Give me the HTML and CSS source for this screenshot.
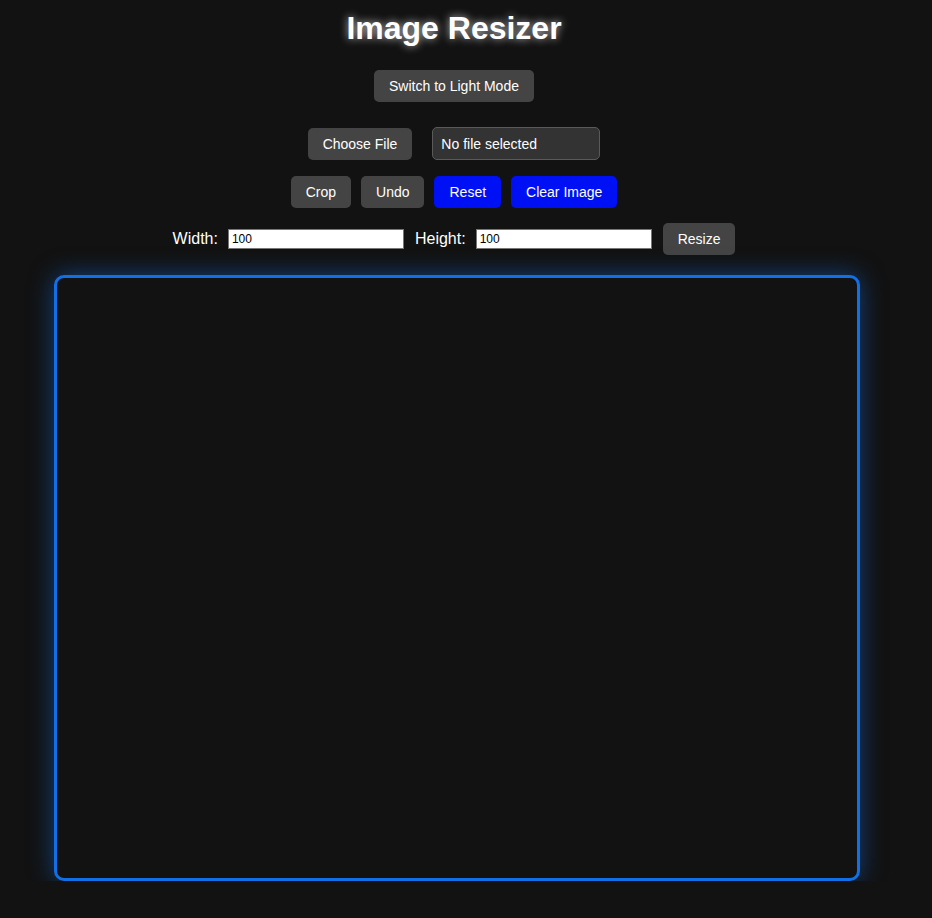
FILE: index.html
```html
<!DOCTYPE html>
<html>
<head>
<meta charset="utf-8">
<title>Image Resizer</title>
<link rel="stylesheet" href="styles.css">
</head>
<body>
<div class="app">
  <h1 class="title">Image Resizer</h1>
  <button class="btn mode-btn">Switch to Light Mode</button>
  <div class="row file-row">
    <button class="btn">Choose File</button>
    <div class="file-name">No file selected</div>
  </div>
  <div class="row action-row">
    <button class="btn">Crop</button>
    <button class="btn">Undo</button>
    <button class="btn btn-blue">Reset</button>
    <button class="btn btn-blue">Clear Image</button>
  </div>
  <div class="row size-row">
    <label class="size-label">Width:</label>
    <input class="size-input" type="text" value="100">
    <label class="size-label size-label-2">Height:</label>
    <input class="size-input" type="text" value="100">
    <button class="btn resize-btn">Resize</button>
  </div>
  <div class="canvas-box"></div>
</div>
</body>
</html>
```
FILE: styles.css
```css
html, body {
  margin: 0;
  padding: 0;
  background: #121212;
}
body {
  font-family: "Liberation Sans", Arial, sans-serif;
  color: #fff;
}
.app {
  width: 908px;
  display: flex;
  flex-direction: column;
  align-items: center;
}
.title {
  margin: 10px 0 0;
  font-size: 32px;
  line-height: 37px;
  font-weight: bold;
  color: #fff;
  text-shadow: 0 0 8px rgba(255,255,255,0.75);
}
.btn {
  font-family: "Liberation Sans", Arial, sans-serif;
  font-size: 14px;
  line-height: 16px;
  padding: 8px 15px;
  height: 32px;
  border: none;
  border-radius: 5px;
  background: #444;
  color: #fff;
  margin: 0;
}
.btn-blue {
  background: #0010f5;
}
.mode-btn {
  margin-top: 23px;
}
.row {
  display: flex;
  align-items: center;
  gap: 10px;
}
.file-row {
  margin-top: 25px;
  gap: 20px;
}
.file-name {
  width: 166px;
  height: 31px;
  box-sizing: content-box;
  border: 1px solid #5a5a5a;
  border-radius: 5px;
  background: #333;
  font-size: 14px;
  line-height: 33px;
  text-indent: 8px;
}
.action-row {
  margin-top: 16px;
}
.size-row {
  margin-top: 15px;
  gap: 10px;
}
.size-label {
  font-size: 16px;
  line-height: 18px;
}
.size-label-2 {
  margin-left: 1px;
}
.size-input {
  width: 176px;
  height: 20px;
  box-sizing: border-box;
  border: 1px solid #767676;
  border-radius: 0;
  background: #fff;
  color: #000;
  font-family: "Liberation Sans", Arial, sans-serif;
  font-size: 12px;
  padding: 1px 3px;
  margin: 0;
}
.resize-btn {
  margin-left: 1px;
}
.canvas-box {
  margin-top: 20px;
  margin-left: 6px;
  width: 806px;
  height: 606px;
  box-sizing: border-box;
  border: 3px solid #1170e6;
  border-radius: 10px;
  background: #121212;
  box-shadow: 0 0 24px rgba(17,112,230,0.5);
}
```
